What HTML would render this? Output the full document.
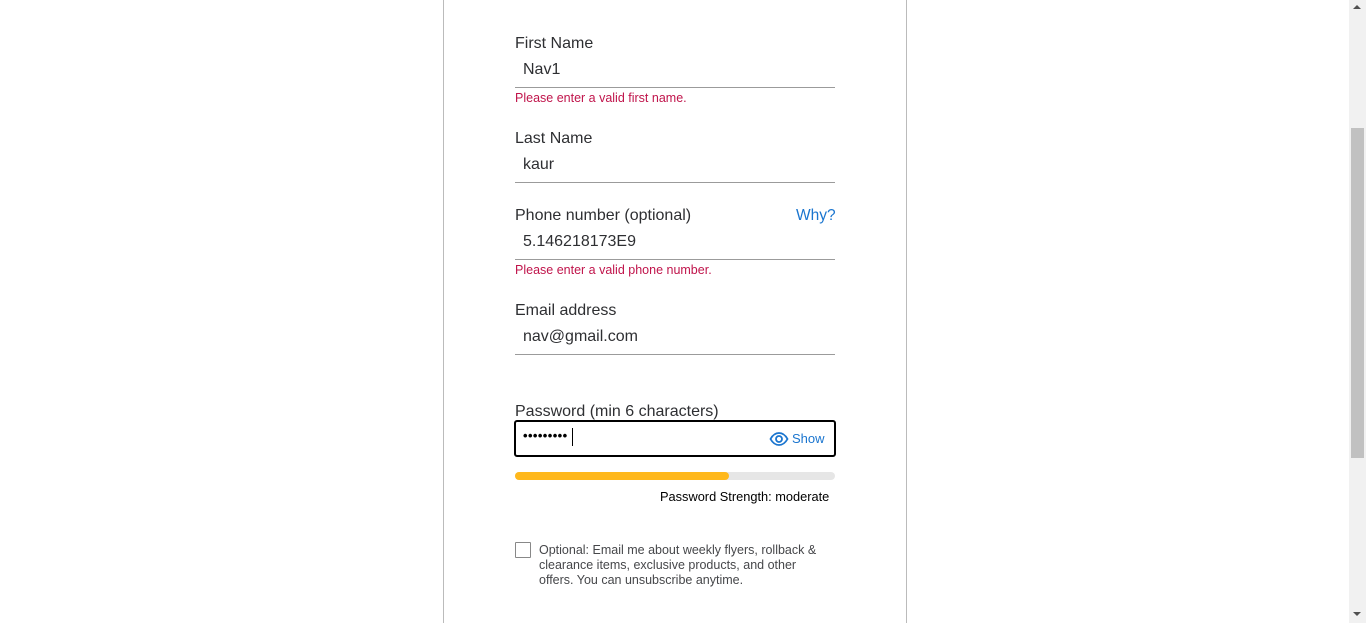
<!DOCTYPE html><html><head><style>
body{margin:0;width:1366px;height:623px;overflow:hidden;background:#fff;font-family:"Liberation Sans",sans-serif;position:relative}
.a{position:absolute}
.lbl{font-size:16px;color:#2e2f32}
.val{font-size:16px;color:#2e2f32}
.line{height:1px;background:#9b9b9b;width:320px;left:515px}
.err{font-size:12.5px;color:#c0144b}
</style></head><body>
<div class="a" style="left:443px;top:0;width:1px;height:623px;background:#bbb"></div>
<div class="a" style="left:906px;top:0;width:1px;height:623px;background:#bbb"></div>

<div class="a lbl" style="left:515px;top:35px">First Name</div>
<div class="a val" style="left:523px;top:61px">Nav1</div>
<div class="a line" style="top:87px"></div>
<div class="a err" style="left:515px;top:91px">Please enter a valid first name.</div>

<div class="a lbl" style="left:515px;top:130px">Last Name</div>
<div class="a val" style="left:523px;top:156px">kaur</div>
<div class="a line" style="top:182px"></div>

<div class="a lbl" style="left:515px;top:207px">Phone number (optional)</div>
<div class="a" style="left:796px;top:207px;font-size:15.5px;color:#1a75cf">Why?</div>
<div class="a val" style="left:523px;top:233px">5.146218173E9</div>
<div class="a line" style="top:259px"></div>
<div class="a err" style="left:515px;top:263px">Please enter a valid phone number.</div>

<div class="a lbl" style="left:515px;top:302px">Email address</div>
<div class="a val" style="left:523px;top:328px">nav@gmail.com</div>
<div class="a line" style="top:354px"></div>

<div class="a lbl" style="left:515px;top:403px">Password (min 6 characters)</div>
<div class="a" style="left:514px;top:420px;width:318px;height:33px;border:2px solid #000;border-radius:3px"></div>
<div class="a" style="left:523px;top:428px;font-size:13px;letter-spacing:0.4px;font-weight:bold">•••••••••</div>
<div class="a" style="left:572px;top:428px;width:1px;height:18px;background:#000"></div>
<svg class="a" style="left:769px;top:431px" width="20" height="16" viewBox="0 0 20 16"><path d="M1.5 8C4 3.5 7 2 10 2s6 1.5 8.5 6C16 12.5 13 14 10 14S4 12.5 1.5 8z" fill="none" stroke="#1a75cf" stroke-width="1.8"/><circle cx="10" cy="8" r="3" fill="none" stroke="#1a75cf" stroke-width="1.8"/></svg>
<div class="a" style="left:792px;top:431px;font-size:13px;color:#1a75cf">Show</div>
<div class="a" style="left:515px;top:472px;width:320px;height:8px;background:#e6e6e6;border-radius:4px"></div>
<div class="a" style="left:515px;top:472px;width:214px;height:8px;background:#ffb81c;border-radius:4px"></div>
<div class="a" style="left:660px;top:489px;font-size:12.8px;color:#000">Password Strength: moderate</div>

<div class="a" style="left:515px;top:542px;width:14px;height:14px;border:1px solid #888;border-radius:1px"></div>
<div class="a" style="left:539px;top:543px;width:292px;font-size:12.5px;line-height:15px;color:#46474a">Optional: Email me about weekly flyers, rollback &amp; clearance items, exclusive products, and other offers. You can unsubscribe anytime.</div>

<div class="a" style="left:1349px;top:0;width:17px;height:623px;background:#f1f1f1"></div>
<div class="a" style="left:1351px;top:128px;width:13px;height:330px;background:#c1c1c1"></div>
<div class="a" style="left:1353px;top:5px;width:0;height:0;border-left:4px solid transparent;border-right:4px solid transparent;border-bottom:4px solid #505050"></div>
<div class="a" style="left:1353px;top:612px;width:0;height:0;border-left:4px solid transparent;border-right:4px solid transparent;border-top:4px solid #505050"></div>
</body></html>
